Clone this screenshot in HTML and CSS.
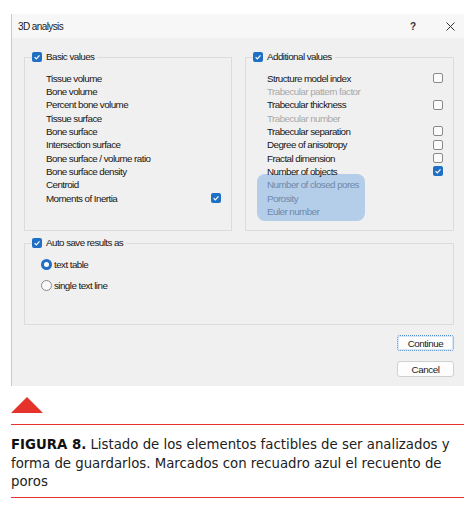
FILE: index.html
```html
<!DOCTYPE html>
<html>
<head>
<meta charset="utf-8">
<link rel="stylesheet" href="styles.css">
</head>
<body>
<div class="dialog">
  <div class="titlebar">
    <span class="title">3D analysis</span>
    <span class="help">?</span>
    <span class="close"><svg width="9" height="9" viewBox="0 0 9 9"><path d="M0.5 0.5 L8.5 8.5 M8.5 0.5 L0.5 8.5" stroke="#333" stroke-width="1" fill="none"/></svg></span>
  </div>
  <div class="content">
    <div class="top-row">
      <div class="group">
        <div class="legend"><span class="cb checked"><svg viewBox="0 0 10 10"><path d="M2.6 5.2 L4.3 6.9 L7.5 3.4" stroke="#fff" stroke-width="1.2" fill="none"/></svg></span><span>Basic values</span></div>
        <div class="list">
          <div class="row"><span>Tissue volume</span></div>
          <div class="row"><span>Bone volume</span></div>
          <div class="row"><span>Percent bone volume</span></div>
          <div class="row"><span>Tissue surface</span></div>
          <div class="row"><span>Bone surface</span></div>
          <div class="row"><span>Intersection surface</span></div>
          <div class="row"><span>Bone surface / volume ratio</span></div>
          <div class="row"><span>Bone surface density</span></div>
          <div class="row"><span>Centroid</span></div>
          <div class="row"><span>Moments of Inertia</span><span class="cb checked"><svg viewBox="0 0 10 10"><path d="M2.6 5.2 L4.3 6.9 L7.5 3.4" stroke="#fff" stroke-width="1.2" fill="none"/></svg></span></div>
        </div>
      </div>
      <div class="group">
        <div class="legend"><span class="cb checked"><svg viewBox="0 0 10 10"><path d="M2.6 5.2 L4.3 6.9 L7.5 3.4" stroke="#fff" stroke-width="1.2" fill="none"/></svg></span><span>Additional values</span></div>
        <div class="list">
          <div class="highlight"></div>
          <div class="row"><span>Structure model index</span><span class="cb"></span></div>
          <div class="row disabled"><span>Trabecular pattern factor</span></div>
          <div class="row"><span>Trabecular thickness</span><span class="cb"></span></div>
          <div class="row disabled"><span>Trabecular number</span></div>
          <div class="row"><span>Trabecular separation</span><span class="cb"></span></div>
          <div class="row"><span>Degree of anisotropy</span><span class="cb"></span></div>
          <div class="row"><span>Fractal dimension</span><span class="cb"></span></div>
          <div class="row"><span>Number of objects</span><span class="cb checked"><svg viewBox="0 0 10 10"><path d="M2.6 5.2 L4.3 6.9 L7.5 3.4" stroke="#fff" stroke-width="1.2" fill="none"/></svg></span></div>
          <div class="row marked"><span>Number of closed pores</span></div>
          <div class="row marked"><span>Porosity</span></div>
          <div class="row marked"><span>Euler number</span></div>
        </div>
      </div>
    </div>
    <div class="group autosave">
      <div class="legend"><span class="cb checked"><svg viewBox="0 0 10 10"><path d="M2.6 5.2 L4.3 6.9 L7.5 3.4" stroke="#fff" stroke-width="1.2" fill="none"/></svg></span><span>Auto save results as</span></div>
      <div class="radios">
        <div class="radio-row"><span class="radio on"></span><span>text table</span></div>
        <div class="radio-row"><span class="radio"></span><span>single text line</span></div>
      </div>
    </div>
    <div class="buttons">
      <div class="btn focus">Continue</div>
      <div class="btn">Cancel</div>
    </div>
  </div>
</div>
<div class="figure">
  <svg class="triangle" width="32" height="16" viewBox="0 0 32 16"><polygon points="16,0 32,16 0,16" fill="#e5322a"/></svg>
  <p class="caption"><b>FIGURA 8.</b> Listado de los elementos factibles de ser analizados y<br>forma de guardarlos. Marcados con recuadro azul el recuento de<br>poros</p>
</div>
</body>
</html>
```

FILE: styles.css
```css
body {
  margin: 0;
  background: #ffffff;
  font-family: "Liberation Sans", Arial, sans-serif;
  color: #161616;
}

.dialog {
  margin: 14px 0 0 11px;
  width: 453px;
  box-sizing: border-box;
  background: #f0f0f0;
  border-left: 1px solid #c9c9c9;
  display: flex;
  flex-direction: column;
}

.titlebar {
  height: 24px;
  display: flex;
  align-items: center;
  background: #f7f7f7;
  padding: 0 9px 0 6px;
  font-size: 10px;
  letter-spacing: -0.6px;
  color: #1a1a1a;
}

.title {
  flex: 1;
}

.help {
  font-weight: bold;
  font-size: 10px;
  letter-spacing: 0;
  color: #333;
  margin-right: 30px;
}

.close {
  display: flex;
}

.content {
  padding: 19px 10px 9px 12px;
  display: flex;
  flex-direction: column;
}

.top-row {
  display: grid;
  grid-template-columns: 208px 209px;
  column-gap: 13px;
}

.group {
  border: 1px solid #dcdcdc;
  padding: 0 10px 12px 21px;
}

.legend {
  display: flex;
  align-items: center;
  gap: 4px;
  width: max-content;
  height: 12px;
  margin: -7px 0 0 -14px;
  padding-right: 3px;
  background: #f0f0f0;
  font-size: 9.8px;
  letter-spacing: -0.55px;
  line-height: 12px;
}

.list {
  position: relative;
  margin-top: 8.35px;
}

.row {
  position: relative;
  height: 13.35px;
  display: flex;
  align-items: center;
  justify-content: space-between;
  font-size: 9.8px;
  letter-spacing: -0.55px;
  line-height: 13px;
  white-space: nowrap;
}

.row.disabled {
  color: #a9a9a9;
}

.row.marked {
  color: #6e8aac;
}

.highlight {
  position: absolute;
  left: -10px;
  top: 102.65px;
  width: 108px;
  height: 47px;
  background: #b4cde8;
  border-radius: 8px;
}

.cb {
  width: 10px;
  height: 10px;
  box-sizing: border-box;
  border-radius: 2px;
  border: 1px solid #8a8a8a;
  background: #fbfbfb;
  flex: none;
  display: flex;
}

.cb.checked {
  border: none;
  background: #1f6fc5;
}

.cb svg {
  width: 10px;
  height: 10px;
}

.autosave {
  margin-top: 12px;
  padding-bottom: 28px;
}

.radios {
  margin: 5px 0 0 -5px;
}

.radio-row {
  height: 21px;
  display: flex;
  align-items: center;
  gap: 2px;
  font-size: 9.8px;
  letter-spacing: -0.55px;
}

.radio {
  width: 11px;
  height: 11px;
  box-sizing: border-box;
  border-radius: 50%;
  border: 1px solid #8a8a8a;
  background: #fafafa;
}

.radio.on {
  border: 3.5px solid #1f6fc5;
  background: #ffffff;
}

.buttons {
  align-self: flex-end;
  margin-top: 10px;
  display: flex;
  flex-direction: column;
  gap: 10px;
}

.btn {
  width: 57px;
  height: 16px;
  box-sizing: border-box;
  border: 1px solid #d0d0d0;
  border-radius: 3px;
  background: #fdfdfd;
  font-size: 9.8px;
  letter-spacing: -0.45px;
  display: flex;
  align-items: center;
  justify-content: center;
  color: #1a1a1a;
}

.btn.focus {
  border: 1px dotted #4a86c8;
  box-shadow: inset 0 0 0 1px #d7e6f6;
}

.figure {
  margin: 11px 8px 0 11px;
}

.triangle {
  display: block;
}

.caption {
  margin: 11px 0 0 0;
  border-top: 1.5px solid #e5322a;
  border-bottom: 1.5px solid #e5322a;
  padding: 11px 0 5px 0;
  font-family: "DejaVu Sans", sans-serif;
  font-size: 13.3px;
  line-height: 18.5px;
  white-space: nowrap;
  color: #222;
}

.caption b {
  font-weight: bold;
  color: #111;
}
```
